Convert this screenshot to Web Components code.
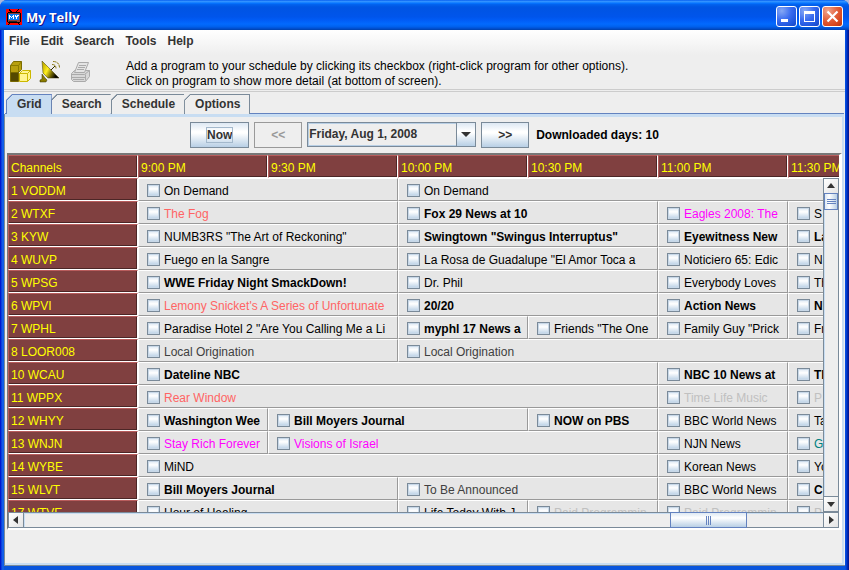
<!DOCTYPE html>
<html lang="en">
<head>
<meta charset="utf-8">
<title>My Telly</title>
<style>
  html, body {
    height: 100%;
    margin: 0;
  }
  body {
    font: 12px/15px "Liberation Sans", Arial, sans-serif;
    color: #000;
    background: #a9b8dc;
    overflow: hidden;
  }
</style>
</head>
<body>
<telly-window data-title="My Telly">
  <menu-bar data-items="File,Edit,Search,Tools,Help"></menu-bar>
  <tool-bar>
    Add a program to your schedule by clicking its checkbox (right-click program for other options).<br>
    Click on program to show more detail (at bottom of screen).
  </tool-bar>
  <tab-panel data-tabs="Grid,Search,Schedule,Options">
    <day-picker data-day="Friday, Aug 1, 2008">Downloaded days: 10</day-picker>
    <program-grid></program-grid>
  </tab-panel>
</telly-window>

<script>
const attach = (el, html) => {
  const template = document.createElement("template");
  template.innerHTML = `<style>*{box-sizing:border-box}button{font:inherit;color:inherit;margin:0}</style>${html}`;
  el.attachShadow({ mode: "open" }).appendChild(template.content.cloneNode(true));
};

class TellyWindow extends HTMLElement {
  connectedCallback() {
    const title = this.getAttribute("data-title") || "";
    attach(this, /*html*/ `
      <style>
        :host {
          display: flex;
          flex-direction: column;
          box-sizing: border-box;
          height: 100vh;
          padding: 0 4px 4px;
          border-radius: 7px 7px 0 0;
          overflow: hidden;
          background: linear-gradient(90deg, #0019cf 0, #0019cf 1px, #0831d9 1px, #166aee 3px, #0855dd 4px, #0855dd calc(100% - 4px), #0046e0 calc(100% - 3px), #001ea0 calc(100% - 1px), #00138c);
        }
        header {
          display: flex;
          align-items: center;
          gap: 4px;
          flex: none;
          height: 30px;
          margin: 0 -4px;
          padding: 3px 6px 0;
          background: linear-gradient(#0058ee 0, #3593ff 4%, #288eff 7%, #127dff 9%, #036ffc 12%, #0262ee 15%, #0057e5 22%, #0054e3 26%, #0055eb 56%, #005bf5 66%, #026afe 80%, #0062ef 88%, #0052d6 94%, #0040ab);
        }
        h1 {
          flex: 1;
          margin: 0;
          font: bold 13px/18px "Open Sans", "Noto Sans", sans-serif;
          color: #fff;
          text-shadow: 1px 1px #0f1089;
        }
        nav {
          display: flex;
          gap: 2px;
        }
        nav button {
          display: grid;
          width: 21px;
          height: 21px;
          padding: 0;
          border: 1px solid #fff;
          border-radius: 3px;
          background: radial-gradient(circle at 25% 20%, #86a8f4, #3a6cf0 45%, #2157dd 75%, #1746c4);
        }
        nav .close {
          background: radial-gradient(circle at 25% 20%, #f0a58e, #e2603b 45%, #d6451d 75%, #b13410);
        }
        main {
          flex: 1;
          display: flex;
          flex-direction: column;
          min-height: 0;
          background: linear-gradient(#fff 0, #eee 25px);
          border-bottom: 1px solid #7a8a99;
        }
      </style>
      <header>
        <svg width="16" height="16" viewBox="0 0 16 16" shape-rendering="crispEdges" aria-hidden="true">
          <path fill="#f00" d="M0 0h16v16H0z"/>
          <path d="M3 0h1v1h1v1h1v1h4v-1h1v-1h1v-1h1v1h-1v1h-1v1H4v-1H3v-1H3zM3 14h1v1H3zM2 15h1v1H2zM12 14h1v1h-1zM13 15h1v1h-1z"/>
          <path d="M1 4h1V3h12v1h1v9h-1v1H2v-1H1z"/>
          <path fill="#8c4038" d="M2 4h12v9H2z"/>
          <path fill="#0878f0" d="M2 5h11v6H2z"/>
          <path fill="#222" d="M3 12h8v1H3z"/>
          <path fill="#fff" d="M3 6h1v1h1v1h1v-1h1v-1h1v4h-1v-2h-1v1h-1v-1h-1v2h-1zM9 6h1v1h1v-1h2v1h-1v1h-1v2h-1v-2h-1z"/>
        </svg>
        <h1>${title}</h1>
        <nav>
          <button aria-label="Minimize"><svg width="19" height="19"><path fill="#fff" d="M4 12h7v3H4z"/></svg></button>
          <button aria-label="Maximize"><svg width="19" height="19" shape-rendering="crispEdges"><path fill="#fff" fill-rule="evenodd" d="M4 4h11v11H4zM5 7h9v7H5z"/></svg></button>
          <button class="close" aria-label="Close"><svg width="19" height="19"><path stroke="#fff" stroke-width="2.200" d="M4.500 4.500l10 10M14.500 4.500l-10 10"/></svg></button>
        </nav>
      </header>
      <main><slot></slot></main>
    `);
  }
}

class MenuBar extends HTMLElement {
  connectedCallback() {
    const items = this.getAttribute("data-items").split(",");
    attach(this, /*html*/ `
      <style>
        :host {
          display: flex;
          gap: 11px;
          padding: 4px 5px 2px;
          font-weight: bold;
          color: #333;
        }
        button {
          padding: 0;
          border: 0;
          background: none;
        }
      </style>
      ${items.map((item) => `<button>${item}</button>`).join("")}
    `);
  }
}

class ToolBar extends HTMLElement {
  connectedCallback() {
    attach(this, /*html*/ `
      <style>
        :host {
          display: flex;
          align-items: center;
          height: 39px;
          margin-bottom: 1px;
          padding: 4px 4px 0;
          border-bottom: 1px solid #ccc;
          box-sizing: border-box;
          flex: none;
          box-shadow: 0 1px #eee, 0 2px #ccc;
        }
        button {
          display: grid;
          margin-right: 6px;
          padding: 0;
          border: 0;
          background: none;
        }
        p {
          margin: 0 0 0 28px;
          padding-top: 4px;
        }
      </style>
      <button aria-label="Programs">
        <svg width="24" height="24" viewBox="0 0 24 24">
          <path fill="#b8a010" stroke="#7c6c00" d="M2.500 5.500l3-4h8v8l-3 3h-8z"/>
          <path fill="none" stroke="#8c7c00" d="M2.500 5.500h8l3-4M10.500 5.500v7"/>
          <path fill="#544800" stroke="#786800" d="M2.500 12.500h8v9h-8z"/>
          <path fill="#fff490" stroke="#ccb800" d="M11.500 13.500l3-3h8v8l-3 3h-8z"/>
          <path fill="none" stroke="#ccb800" d="M11.500 13.500h8l3-3M19.500 13.500v8"/>
        </svg>
      </button>
      <button aria-label="Signal">
        <svg width="24" height="24" viewBox="0 0 24 24">
          <defs><linearGradient id="dish" x1="0" y1="0.400" x2="1" y2="0.900">
            <stop offset="0" stop-color="#c8b400"/><stop offset="0.300" stop-color="#ffee20"/><stop offset="0.600" stop-color="#6c6000"/><stop offset="0.850" stop-color="#000"/>
          </linearGradient></defs>
          <path fill="url(#dish)" stroke="#3c3600" stroke-width="0.500" d="M4 1l17 17H10l-5-5z"/>
          <path fill="#8c7c00" stroke="#302c00" stroke-width="0.500" d="M4 14l3 4 2 2-1 2H2v-2l2-1z"/>
          <path fill="none" stroke="#302c00" d="M13 10l4-4"/>
          <path fill="none" stroke="#8c7c18" stroke-dasharray="3 0.500" d="M14 4.500c3 0 4 1.500 4 4M15 1.500c4.500 0 6.500 2.500 6.500 6.500"/>
        </svg>
      </button>
      <button aria-label="Print" disabled>
        <svg width="24" height="24" viewBox="0 0 24 24">
          <g fill="#d8d8d8" stroke="#aaa">
            <path d="M3.500 13.500l3-3h15v6l-4 5h-12l-2-2z"/>
            <path fill="#e4e4e4" d="M6.500 12.500l4-10h10l-4 10z"/>
            <path fill="none" d="M11 5.500h7M10 7.500h7M9 9.500h7M3.500 14.500h13l5-4M17.500 14.500v6M4 17.500h13M5 19.500h11"/>
          </g>
        </svg>
      </button>
      <p><slot></slot></p>
    `);
  }
}

class TabPanel extends HTMLElement {
  connectedCallback() {
    const tabs = this.getAttribute("data-tabs").split(",");
    attach(this, /*html*/ `
      <style>
        :host {
          flex: 1;
          display: flex;
          flex-direction: column;
          min-height: 0;
          padding-top: 3px;
        }
        .tabs {
          display: flex;
          padding: 0 2px;
        }
        .tabs button {
          height: 20px;
          padding: 0 9px 1px 10px;
          border: solid #7a8a99;
          border-width: 1px 0 0 1px;
          background: linear-gradient(135deg, #7a8a99 5px, #eee 5px) border-box;
          clip-path: polygon(6px 0, 100% 0, 100% 100%, 0 100%, 0 6px);
          font-weight: bold;
          color: #333;
        }
        .tabs button:last-child {
          border-right-width: 1px;
        }
        .tabs [aria-selected="true"] {
          border-color: #6382bf;
          border-right-width: 1px;
          background: linear-gradient(135deg, #6382bf 5px, #c8ddf2 5px) border-box;
          margin: 0 -1px -1px 0;
          z-index: 1;
        }
        section {
          flex: 1;
          display: flex;
          flex-direction: column;
          min-height: 0;
          margin: 0 1px;
          padding: 0 0 33px 1px;
          border: solid #c8ddf2;
          border-width: 3px 2px 2px 0;
          box-shadow: 0 -1px #6382bf, -1px 0 #7a8a99;
        }
      </style>
      <div class="tabs" role="tablist">
        ${tabs.map((tab, i) => `<button role="tab" aria-selected="${i === 0}">${tab}</button>`).join("")}
      </div>
      <section><slot></slot></section>
    `);
  }
}

class DayPicker extends HTMLElement {
  connectedCallback() {
    const day = this.getAttribute("data-day");
    attach(this, /*html*/ `
      <style>
        :host {
          display: flex;
          justify-content: center;
          gap: 5px;
          flex: none;
          padding: 5px 0 5px 1px;
          font-weight: bold;
          color: #333;
        }
        button, .arrow {
          background: linear-gradient(#dde8f3 0, #fff 35%, #fff 42%, #b8cfe5);
          border: 1px solid #7a8a99;
        }
        button {
          height: 26px;
          width: 48px;
          padding: 0;
        }
        button.now {
          width: 59px;
        }
        .now span {
          outline: 1px solid #a3b8cc;
        }
        button:disabled {
          color: #999;
          background: #eee;
          border-color: #999;
        }
        .combo {
          display: grid;
          grid-template-columns: 1fr 20px;
          width: 169px;
          height: 25px;
        }
        select {
          grid-area: 1 / 1 / 2 / 3;
          appearance: none;
          font: inherit;
          color: inherit;
          padding: 0 20px 0 1px;
          border: 1px solid #7a8a99;
          border-radius: 0;
          background: #eee;
          box-shadow: inset 0 0 0 1px #b8cfe5;
        }
        .arrow {
          grid-area: 1 / 2 / 2 / 3;
          display: grid;
          place-items: center;
          pointer-events: none;
        }
        .label {
          align-self: center;
          padding: 1px 0 0 2px;
          color: #000;
        }
      </style>
      <button class="now"><span>Now</span></button>
      <button disabled>&lt;&lt;</button>
      <div class="combo">
        <select aria-label="Day"><option>${day}</option></select>
        <span class="arrow"><svg width="10" height="5"><path fill="#333" d="M0 0h10L5 5z"/></svg></span>
      </div>
      <button>&gt;&gt;</button>
      <span class="label"><slot></slot></span>
    `);
  }
}

class ScrollBar extends HTMLElement {
  connectedCallback() {
    const vertical = this.hasAttribute("data-vertical");
    const [before, after] = this.getAttribute("data-track").split(",");
    const size = this.getAttribute("data-thumb");
    const arrows = vertical
      ? ["M0 6h8L4 1z", "M0 2h8L4 7z"]
      : ["M6 0v8L1 4z", "M2 0v8l5-4z"];
    attach(this, /*html*/ `
      <style>
        :host {
          display: flex;
          flex-direction: ${vertical ? "column" : "row"};
          background: #eee;
          border: 1px solid #7a8a99;
          box-sizing: border-box;
        }
        button {
          flex: none;
          display: grid;
          place-items: center;
          width: 14px;
          height: 14px;
          padding: 0;
          border: 0;
          background: linear-gradient(135deg, #fff, #e4e4e4);
        }
        .track {
          flex: 1;
          display: flex;
          flex-direction: inherit;
          border: solid #7a8a99;
          border-width: ${vertical ? "1px 0" : "0 1px"};
          box-shadow: inset 1px 1px #c8ddf2;
        }
        .thumb {
          flex: 0 0 ${size};
          display: grid;
          place-items: center;
          border: 1px solid #6382bf;
          margin: -1px 0;
          background: linear-gradient(${vertical ? "90deg" : "180deg"}, #dde8f3, #fff 35%, #b8cfe5);
        }
      </style>
      <button aria-label="Back"><svg width="8" height="8"><path fill="#333" d="${arrows[0]}"/></svg></button>
      <div class="track">
        <span style="flex:${before}"></span>
        <div class="thumb"><svg width="9" height="9" shape-rendering="crispEdges"><path stroke="#6382bf" d="${
          vertical ? "M0 2.500h9M0 4.500h9M0 6.500h9" : "M2.500 0v9M4.500 0v9M6.500 0v9"}"/></svg></div>
        <span style="flex:${after}"></span>
      </div>
      <button aria-label="Forward"><svg width="8" height="8"><path fill="#333" d="${arrows[1]}"/></svg></button>
    `);
  }
}

class ProgramItem extends HTMLElement {
  connectedCallback() {
    attach(this, /*html*/ `
      <style>
        :host {
          display: block;
          overflow: hidden;
        }
        :host([kind="new"]) { font-weight: bold; }
        :host([kind="movie"]) { color: #ff6464; }
        :host([kind="special"]) { color: #f0f; }
        :host([kind="filler"]) { color: #404040; }
        :host([kind="paid"]) { color: #c0c0c0; }
        :host([kind="sport"]) { color: #008080; }
        label {
          display: flex;
          align-items: flex-start;
          gap: 4px;
          height: 21px;
          padding: 5px 0 0 8px;
          white-space: nowrap;
        }
        input {
          appearance: none;
          flex: none;
          width: 13px;
          height: 13px;
          margin: 0;
          border: 1px solid #7a8a99;
          box-shadow: inset 0 0 0 1px #c8d8e8;
          background: linear-gradient(#dde8f3, #fff 35%, #b8cfe5);
        }
      </style>
      <label><input type="checkbox"><span><slot></slot></span></label>
    `);
  }
}

const TIMES = ["9:00 PM", "9:30 PM", "10:00 PM", "10:30 PM", "11:00 PM", "11:30 PM"];

// [channel, [half hours, title, kind], ...]
const LISTINGS = [
  ["1 VODDM", [2, "On Demand"], [4, "On Demand"]],
  ["2 WTXF", [2, "The Fog", "movie"], [2, "Fox 29 News at 10", "new"], [1, "Eagles 2008: The", "special"], [1, "S"]],
  ["3 KYW", [2, 'NUMB3RS "The Art of Reckoning"'], [2, 'Swingtown "Swingus Interruptus"', "new"], [1, "Eyewitness New", "new"], [1, "La", "new"]],
  ["4 WUVP", [2, "Fuego en la Sangre"], [2, 'La Rosa de Guadalupe "El Amor Toca a'], [1, "Noticiero 65: Edic"], [1, "N"]],
  ["5 WPSG", [2, "WWE Friday Night SmackDown!", "new"], [2, "Dr. Phil"], [1, "Everybody Loves"], [1, "Th"]],
  ["6 WPVI", [2, "Lemony Snicket's A Series of Unfortunate", "movie"], [2, "20/20", "new"], [1, "Action News", "new"], [1, "Ni", "new"]],
  ["7 WPHL", [2, 'Paradise Hotel 2 "Are You Calling Me a Li'], [1, "myphl 17 News a", "new"], [1, 'Friends "The One'], [1, 'Family Guy "Prick'], [1, "Fr"]],
  ["8 LOOR008", [2, "Local Origination", "filler"], [4, "Local Origination", "filler"]],
  ["10 WCAU", [4, "Dateline NBC", "new"], [1, "NBC 10 News at", "new"], [1, "Th", "new"]],
  ["11 WPPX", [4, "Rear Window", "movie"], [1, "Time Life Music", "paid"], [1, "P", "paid"]],
  ["12 WHYY", [1, "Washington Wee", "new"], [2, "Bill Moyers Journal", "new"], [1, "NOW on PBS", "new"], [1, "BBC World News"], [1, "Ta"]],
  ["13 WNJN", [1, "Stay Rich Forever", "special"], [3, "Visions of Israel", "special"], [1, "NJN News"], [1, "G", "sport"]],
  ["14 WYBE", [4, "MiND"], [1, "Korean News"], [1, "Yo"]],
  ["15 WLVT", [2, "Bill Moyers Journal", "new"], [2, "To Be Announced", "filler"], [1, "BBC World News"], [1, "Ch", "new"]],
  ["17 WTVE", [2, "Hour of Healing"], [1, "Life Today With J"], [1, "Paid Programmin", "paid"], [1, "Paid Programmin", "paid"], [1, "P", "paid"]],
];

class ProgramGrid extends HTMLElement {
  connectedCallback() {
    const rows = LISTINGS.map(([channel, ...programs]) => `
      <tr>
        <th scope="row">${channel}</th>
        ${programs.map(([span, title, kind = ""]) => `<td colspan="${span}"><program-item kind="${kind}">${title}</program-item></td>`).join("")}
      </tr>`);
    attach(this, /*html*/ `
      <style>
        :host {
          flex: 1;
          display: grid;
          grid-template: 23px minmax(0, 1fr) 16px / minmax(0, 1fr) 16px;
          min-height: 0;
          margin-left: 1px;
          border: solid;
          border-width: 2px 3px 2px 1px;
          border-color: #777 #fff #fff #777;
        }
        .view {
          grid-area: 1 / 1 / 3 / 3;
          overflow: hidden;
        }
        table {
          width: 910px;
          table-layout: fixed;
          border-collapse: separate;
          border-spacing: 0;
        }
        th, td {
          height: 23px;
          padding: 0;
          border: 1px solid;
        }
        th {
          padding: 3px 0 0 2px;
          text-align: left;
          font-weight: normal;
          color: #ff0;
          background: #804040;
          border-color: #b85c5c #fff #fff #b85c5c;
          box-shadow: inset -1px -1px #4c2626;
        }
        td {
          background: #e6e6e6;
          border-color: #fff #999 #999 #fff;
        }
        .v {
          grid-area: 2 / 2;
        }
        .h {
          grid-area: 3 / 1 / 4 / 3;
        }
      </style>
      <div class="view">
        <table>
          <thead><tr><th scope="col">Channels</th>${TIMES.map((t) => `<th scope="col">${t}</th>`).join("")}</tr></thead>
          <tbody>${rows.join("")}</tbody>
        </table>
      </div>
      <scroll-bar class="v" data-vertical data-track="0,1" data-thumb="17px"></scroll-bar>
      <scroll-bar class="h" data-track="646,76" data-thumb="77px"></scroll-bar>
    `);
  }
}

customElements.define("telly-window", TellyWindow);
customElements.define("menu-bar", MenuBar);
customElements.define("tool-bar", ToolBar);
customElements.define("tab-panel", TabPanel);
customElements.define("day-picker", DayPicker);
customElements.define("scroll-bar", ScrollBar);
customElements.define("program-item", ProgramItem);
customElements.define("program-grid", ProgramGrid);
</script>
</body>
</html>
